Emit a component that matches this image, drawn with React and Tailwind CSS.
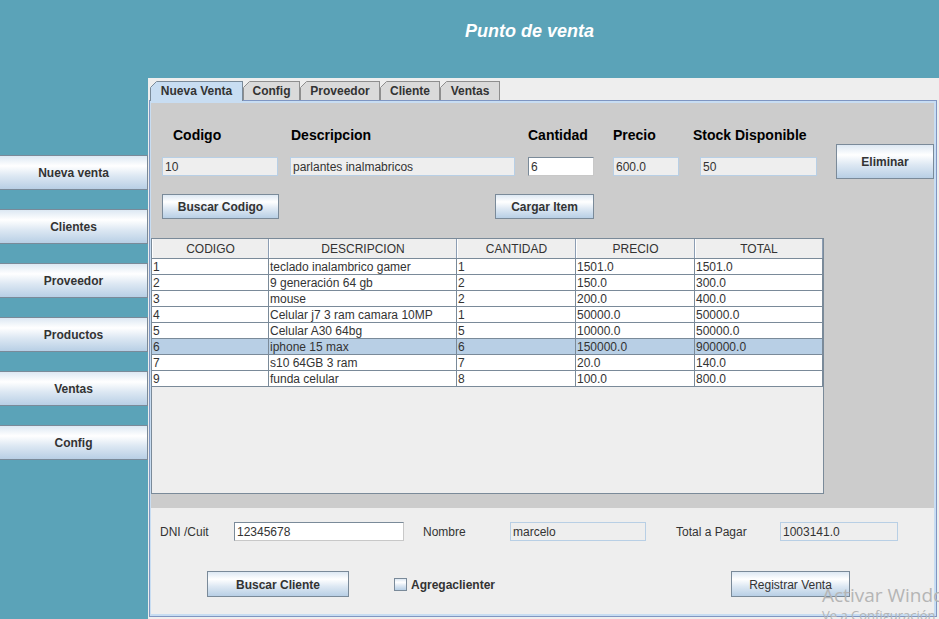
import React from "react";

const GRAD =
  "bg-[linear-gradient(to_bottom,#DDE8F3_0%,#FFFFFF_30%,#DDE8F3_60%,#B8CFE5_100%)]";

function Btn({ className = "", bold = true, children }) {
  return (
    <div
      className={`flex shrink-0 items-center justify-center border border-[#7A8A99] ${GRAD} pt-px text-[12px] ${
        bold ? "font-bold" : "font-normal"
      } text-[#333333] ${className}`}
    >
      {children}
    </div>
  );
}

function Tab({ label, w, selected }) {
  return (
    <div
      className={`relative flex shrink-0 items-center justify-center border-t border-l border-r text-[12px] font-bold text-[#333333] ${w} ${
        selected
          ? "z-10 -mb-px h-[20px] border-[#7A8A99] bg-[#C8DDF2]"
          : "h-[19px] border-[#8E8E8E] bg-[#DADADA]"
      }`}
    >
      <svg className="absolute -left-px -top-px" width="7" height="7">
        <polygon points="0,0 7,0 0,7" fill="#EEEEEE" />
        <line
          x1="0.5"
          y1="6.5"
          x2="6.5"
          y2="0.5"
          stroke={selected ? "#7A8A99" : "#8E8E8E"}
          strokeWidth="1"
        />
      </svg>
      <span className={selected ? "pb-px" : ""}>{label}</span>
    </div>
  );
}

function RoField({ className = "", children }) {
  return (
    <div
      className={`flex h-[19px] shrink-0 items-center border border-[#B8CFE5] bg-[#EEEEEE] pl-[2px] pt-px text-[12px] text-[#333333] ${className}`}
    >
      {children}
    </div>
  );
}

function EdField({ className = "", children }) {
  return (
    <div
      className={`flex h-[19px] shrink-0 items-center border border-[#7A8A99] border-r-[#C8C8C8] border-b-[#C8C8C8] bg-white pl-[2px] pt-px text-[12px] text-[#333333] ${className}`}
    >
      {children}
    </div>
  );
}

const COLS = ["w-[117px]", "w-[188px]", "w-[119px]", "w-[119px]", "w-[128px]"];
const HEAD = ["CODIGO", "DESCRIPCION", "CANTIDAD", "PRECIO", "TOTAL"];
const ROWS = [
  ["1", "teclado inalambrico gamer", "1", "1501.0", "1501.0"],
  ["2", "9 generación 64 gb", "2", "150.0", "300.0"],
  ["3", "mouse", "2", "200.0", "400.0"],
  ["4", "Celular j7 3 ram camara 10MP", "1", "50000.0", "50000.0"],
  ["5", "Celular A30 64bg", "5", "10000.0", "50000.0"],
  ["6", "iphone 15 max", "6", "150000.0", "900000.0"],
  ["7", "s10 64GB 3 ram", "7", "20.0", "140.0"],
  ["9", "funda celular", "8", "100.0", "800.0"],
];

const SIDE = ["Nueva venta", "Clientes", "Proveedor", "Productos", "Ventas", "Config"];

export default function App() {
  return (
    <div className="relative flex h-[619px] w-[939px] flex-col overflow-hidden bg-[#5BA3B8] font-['Liberation_Sans',Arial,sans-serif]">
      {/* Header */}
      <div className="h-[78px] shrink-0 pl-[465px] pt-[20px] text-[18px] font-bold italic leading-[22px] text-white">
        Punto de venta
      </div>

      <div className="flex min-h-0 flex-1">
        {/* Sidebar */}
        <div className="flex w-[148px] shrink-0 flex-col gap-[19px] pt-[77px]">
          {SIDE.map((s) => (
            <Btn key={s} className="h-[35px] w-[148px] border-l-0">
              {s}
            </Btn>
          ))}
        </div>

        {/* Tabbed pane */}
        <div className="flex w-[791px] shrink-0 flex-col bg-[#EEEEEE] pl-px pr-[2px]">
          <div className="flex h-[22px] shrink-0 items-end pl-px">
            <Tab label="Nueva Venta" w="w-[93px]" selected />
            <Tab label="Config" w="w-[57px]" />
            <Tab label="Proveedor" w="w-[80px]" />
            <Tab label="Cliente" w="w-[60px]" />
            <Tab label="Ventas" w="w-[60px]" />
          </div>

          <div className="flex h-[517px] shrink-0 flex-col border border-[#7F96C2] bg-[#C8DDF2] pb-[2px] pl-px pr-[2px] pt-[2px]">
            {/* Top gray section */}
            <div className="flex h-[405px] shrink-0 bg-[#CCCCCC]">
              <div className="flex w-[685px] shrink-0 flex-col">
                <div className="mt-[23px] flex h-[16px] pt-px text-[14px] font-bold leading-[16px] text-black">
                  <span className="ml-[22px] w-[118px] shrink-0">Codigo</span>
                  <span className="w-[237px] shrink-0">Descripcion</span>
                  <span className="w-[85px] shrink-0">Cantidad</span>
                  <span className="w-[80px] shrink-0">Precio</span>
                  <span className="shrink-0 whitespace-nowrap">Stock Disponible</span>
                </div>

                <div className="mt-[15px] flex h-[19px]">
                  <RoField className="ml-[11px] w-[116px]">10</RoField>
                  <RoField className="ml-[12px] w-[225px]">parlantes inalmabricos</RoField>
                  <EdField className="ml-[13px] w-[66px]">6</EdField>
                  <RoField className="ml-[19px] w-[66px]">600.0</RoField>
                  <RoField className="ml-[21px] w-[117px]">50</RoField>
                </div>

                <div className="mt-[18px] flex h-[25px]">
                  <Btn className="ml-[11px] h-[25px] w-[117px]">Buscar Codigo</Btn>
                  <Btn className="ml-[216px] h-[25px] w-[99px]">Cargar Item</Btn>
                </div>

                {/* Table */}
                <div className="mt-[19px] flex h-[256px] w-[673px] shrink-0 flex-col border border-[#7A8A99] bg-[#EEEEEE] text-[12px] text-[#333333]">
                  <div className="flex h-[20px] shrink-0 border-b border-[#7A8A99] bg-[#EEEEEE]">
                    {HEAD.map((h, i) => (
                      <div
                        key={h}
                        className={`${COLS[i]} flex h-full shrink-0 items-center justify-center border-r border-l border-r-[#8C9DB3] border-l-white pt-px`}
                      >
                        {h}
                      </div>
                    ))}
                  </div>
                  {ROWS.map((r, ri) => (
                    <div
                      key={ri}
                      className={`flex h-[16px] shrink-0 border-b border-[#7A8A99] ${
                        ri === 5 ? "bg-[#B8CFE5]" : "bg-white"
                      }`}
                    >
                      {r.map((c, ci) => (
                        <div
                          key={ci}
                          className={`${COLS[ci]} h-full shrink-0 overflow-hidden whitespace-nowrap border-r border-[#7A8A99] pl-px leading-[16px]`}
                        >
                          {c}
                        </div>
                      ))}
                    </div>
                  ))}
                </div>
              </div>

              <Btn className="mt-[41px] h-[35px] w-[98px]">Eliminar</Btn>
            </div>

            {/* Bottom section */}
            <div className="flex flex-1 flex-col bg-[#EEEEEE] text-[12px] text-[#333333]">
              <div className="mt-[14px] flex h-[19px] items-center">
                <span className="ml-[9px] w-[74px] shrink-0 pt-px">DNI /Cuit</span>
                <EdField className="w-[170px]">12345678</EdField>
                <span className="ml-[19px] w-[87px] shrink-0 pt-px">Nombre</span>
                <RoField className="w-[136px]">marcelo</RoField>
                <span className="ml-[30px] w-[104px] shrink-0 pt-px">Total a Pagar</span>
                <RoField className="w-[118px]">1003141.0</RoField>
              </div>

              <div className="mt-[30px] flex h-[26px] items-center">
                <Btn className="ml-[56px] h-[26px] w-[142px]">Buscar Cliente</Btn>
                <div className={`ml-[45px] h-[13px] w-[13px] shrink-0 border border-[#7A8A99] ${GRAD}`} />
                <span className="ml-[4px] pt-px font-bold">Agregaclienter</span>
                <Btn bold={false} className="ml-auto mr-[84px] h-[26px] w-[119px]">
                  Registrar Venta
                </Btn>
              </div>
            </div>
          </div>
        </div>
      </div>

      {/* Windows activation watermark */}
      <div className="pointer-events-none absolute left-[822px] top-[584px] whitespace-nowrap font-['Open_Sans',sans-serif] text-[19px] leading-[22px] text-[#B5B5B5]">
        Activar Windows
      </div>
      <div className="pointer-events-none absolute left-[822px] top-[608px] whitespace-nowrap font-['Open_Sans',sans-serif] text-[13px] leading-[14px] text-[#B5B5B5]">
        Ve a Configuración
      </div>
    </div>
  );
}
